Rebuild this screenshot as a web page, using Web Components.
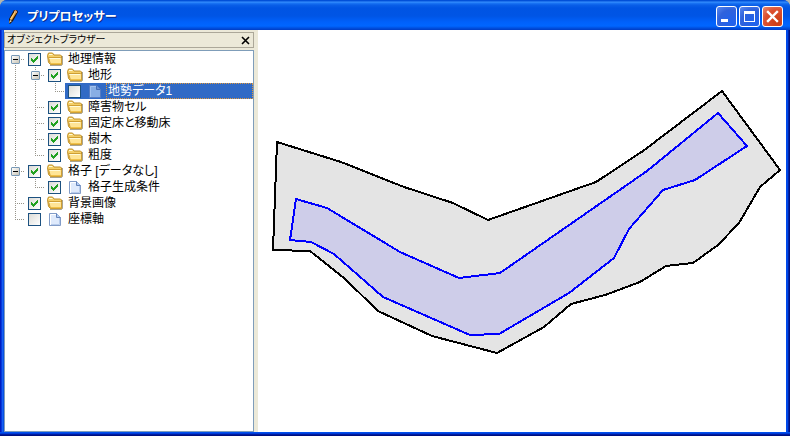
<!DOCTYPE html>
<html lang="ja">
<head>
<meta charset="utf-8">
<title>プリプロセッサー</title>
<style>
body { margin: 0; background: #b4b6ae; color: #000; font: 12px/16px "Liberation Sans", "Noto Sans CJK JP", sans-serif; font-feature-settings: "palt"; }
</style>
</head>
<body>
<app-window caption="プリプロセッサー">
  <dock-panel slot="side" caption="オブジェクトブラウザー">
    <tree-item label="地理情報" icon="folder" checked open first>
      <tree-item label="地形" icon="folder" checked open>
        <tree-item label="地勢データ1" icon="page" selected last></tree-item>
      </tree-item>
      <tree-item label="障害物セル" icon="folder" checked></tree-item>
      <tree-item label="固定床と移動床" icon="folder" checked></tree-item>
      <tree-item label="樹木" icon="folder" checked></tree-item>
      <tree-item label="粗度" icon="folder" checked last></tree-item>
    </tree-item>
    <tree-item label="格子 [データなし]" icon="folder" checked open>
      <tree-item label="格子生成条件" icon="page" checked last></tree-item>
    </tree-item>
    <tree-item label="背景画像" icon="folder" checked></tree-item>
    <tree-item label="座標軸" icon="page" last></tree-item>
  </dock-panel>
  <map-view></map-view>
</app-window>

<script>
class AppWindow extends HTMLElement {
  connectedCallback() {
    const root = this.attachShadow({ mode: 'open' });
    root.innerHTML = `
<style>
:host { display: flex; flex-direction: column; min-height: 100vh; box-sizing: border-box; border-radius: 7px 7px 0 0; overflow: hidden; background: #0046e0; }
header { display: flex; align-items: center; height: 30px; padding: 3px 7px 0 5px; box-sizing: border-box;
  background: linear-gradient(#0250d8 0 1px, #3a92ff 2px, #1c77f5 3px, #0a5fe8 5px, #0054e3 8px, #0055e5 16px, #0061fb 22px, #0066ff 26px, #0050e0 28px, #003cc4 30px); }
.logo { width: 16px; height: 16px; }
h1 { flex: 1; margin: 0 0 0 6px; color: #fff; font-size: 12px; line-height: 16px; font-weight: 700; text-shadow: 1px 1px 0 #0b2a8c; }
.controls { display: flex; gap: 2px; }
button { display: block; width: 21px; height: 21px; padding: 0; border: 1px solid #fff; border-radius: 3px; background: radial-gradient(circle at 75% 80%, #1f62ee, #2f62dc 60%, #5c8af0 100%); }
button.close { background: radial-gradient(circle at 75% 80%, #cc3c12, #dc5030 60%, #ea8a70 100%); }
button svg { display: block; width: 19px; height: 19px; }
main { flex: 1; display: flex; padding: 0 4px 4px;
  background: linear-gradient(to right, #001ec0 0 1px, #0838dc 1px 2px, #1660f0 2px 3px, #0a50e4 3px 4px, transparent 4px calc(100% - 4px), #0048e8 calc(100% - 4px) calc(100% - 2px), #0024a8 calc(100% - 2px) calc(100% - 1px), #001080 calc(100% - 1px)) no-repeat 0 0 / 100% calc(100% - 4px),
  linear-gradient(#0050ee 0 1px, #003cd8 1px 2px, #001ca0 2px 3px, #001080 3px) no-repeat 0 100% / 100% 4px; }
.client { flex: 1; display: flex; min-width: 0; background: #ece9d8; }
::slotted(map-view) { flex: 1; min-width: 0; }
</style>
<header>
  <svg class="logo" viewBox="0 0 16 16" aria-hidden="true">
    <path d="M4 14L4 10L9 1L12 1L13 3L8 12L5 15Z" fill="#2b1608"/>
    <path d="M5 10L10 2L12 3L7 11Z" fill="#e09a38"/><path d="M5 10L10 2L11 2L6 11Z" fill="#ffd684"/>
    <path d="M5 11L7 12L4 14Z" fill="#eee2c0"/><path d="M10 1L12 2L12 4L9 3Z" fill="#d9a078"/>
  </svg>
  <h1></h1>
  <div class="controls">
    <button aria-label="最小化"><svg viewBox="0 0 19 19"><path d="M4 12h7v3H4z" fill="#fff"/></svg></button>
    <button aria-label="最大化"><svg viewBox="0 0 19 19"><path d="M4 4h11v11H4zM5 7v7h9V7z" fill="#fff" fill-rule="evenodd"/></svg></button>
    <button class="close" aria-label="閉じる"><svg viewBox="0 0 19 19"><path d="M5 5l9 9M14 5l-9 9" stroke="#fff" stroke-width="2.4" stroke-linecap="square"/></svg></button>
  </div>
</header>
<main><div class="client"><slot name="side"></slot><slot></slot></div></main>`;
    root.querySelector('h1').textContent = this.getAttribute('caption');
  }
}

class DockPanel extends HTMLElement {
  connectedCallback() {
    const root = this.attachShadow({ mode: 'open' });
    root.innerHTML = `
<style>
:host { display: flex; flex-direction: column; gap: 2px; flex: 0 0 250px; margin-right: 4px; padding-top: 2px; box-sizing: border-box; }
header { display: flex; align-items: center; height: 16px; box-sizing: border-box; border: 1px solid #aca899; padding: 0 3px 0 2px; }
h2 { flex: 1; margin: 0; font-size: 10px; line-height: 14px; font-weight: 400; }
button { width: 9px; height: 9px; padding: 0; border: 0; background: none; }
button svg { display: block; }
.tree { flex: 1; border: 1px solid #7f9db9; background: #fff; }
</style>
<header><h2></h2><button aria-label="パネルを閉じる"><svg width="9" height="9" viewBox="0 0 9 9"><path d="M1 1l7 7M8 1L1 8" stroke="#000" stroke-width="1.6"/></svg></button></header>
<div class="tree" role="tree"><slot></slot></div>`;
    root.querySelector('h2').textContent = this.getAttribute('caption');
  }
}

const ICONS = {
  folder: `<path d="M3 14.500h11.500l1-1V5" fill="none" stroke="#706848" opacity=".6"/>
    <path d="M.5 4.500l1-2.500h4l1.500 2h6.500l1 1v8.500h-11l-2-2z" fill="#f5d068" stroke="#c0902a"/>
    <path d="M3.500 13.500L1.500 6.500h12l1 1v6z" fill="#ffe596" stroke="#cf9f34"/>
    <path d="M2.500 7.500h10.500M2 3.500h3.500" stroke="#fffbd8"/><path d="M4 12.500h10" stroke="#f0c24a"/>`,
  page: `<path d="M2.500 2.500h7l4 4v8h-11z" fill="#dfeafc" stroke="#829cc8"/>
    <path d="M3.500 14V3.500H9" fill="none" stroke="#fff"/><path d="M9.500 2.500v4h4" fill="#b4cdf4" stroke="#6484ba"/>
    <path d="M4 13.500h8.500V7" fill="none" stroke="#b8ccec"/>`,
  pageSelected: `<path d="M2.500 2.500h7l4 4v8h-11z" fill="#88aee4" stroke="#547bc2"/>
    <path d="M3.500 14V3.500H9" fill="none" stroke="#a3c3ef"/><path d="M9.500 2.500v4h4" fill="#6890d4" stroke="#456eb8"/>`
};

class TreeItem extends HTMLElement {
  connectedCallback() {
    const root = this.attachShadow({ mode: 'open' });
    const selected = this.hasAttribute('selected');
    root.innerHTML = `
<style>
:host { display: grid; grid-template-columns: 20px 1fr; --dots: repeating-linear-gradient(#97948a 0 1px, transparent 1px 2px); }
.rail { display: flex; align-items: center; justify-content: center; height: 16px;
  background: var(--dots) no-repeat 10px 0 / 1px 100%, repeating-linear-gradient(to right, #97948a 0 1px, transparent 1px 2px) no-repeat 10px 8px / 10px 1px; }
:host([last]) .rail { background-size: 1px 8px, 10px 1px; }
:host([first]) .rail { background-position: 10px 8px, 10px 8px; }
.stem { background: var(--dots) no-repeat 10px 0 / 1px 100%; }
:host([last]) .stem { background: none; }
.rail button { width: 9px; height: 9px; padding: 0; margin: 1px 0 0 1px; box-sizing: border-box; border: 1px solid #7898b5; border-radius: 1px;
  background: linear-gradient(#000, #000) no-repeat center / 5px 1px, linear-gradient(135deg, #fff, #c8c3b4); }
.row { display: flex; align-items: center; height: 16px; padding-left: 3px; }
input { appearance: none; flex: none; box-sizing: border-box; width: 13px; height: 13px; margin: 1px 6px 0 0; border: 1px solid #1c5180; background: linear-gradient(135deg, #dcdcd7, #fff); }
input:checked { background: url("data:image/svg+xml,%3Csvg xmlns='http://www.w3.org/2000/svg' viewBox='0 0 11 11' shape-rendering='crispEdges'%3E%3Cpath d='M2 4h1v1h1v1h1v-1h1v-1h1v-1h1v-1h1v3h-1v1h-1v1h-1v1h-1v1h-1v-1h-1v-1h-1z' fill='%2321a121'/%3E%3C/svg%3E") no-repeat center / 11px 11px, linear-gradient(135deg, #dcdcd7, #fff); }
.icon { flex: none; width: 16px; height: 16px; }
label { line-height: 14px; padding: 0 2px; margin-left: 3px; border: 1px solid transparent; border-width: 1px 0; white-space: nowrap; }
:host([selected]) .row { background: #316ac5; }
:host([selected]) label { flex: 1; color: #fff; border: 1px dotted #e0983a; padding: 0 1px; }
</style>
<div class="rail">${this.hasAttribute('open') ? '<button aria-label="折りたたむ" aria-expanded="true"></button>' : ''}</div>
<div class="row" role="treeitem">
  <input type="checkbox" id="box"${this.hasAttribute('checked') ? ' checked' : ''}>
  <svg class="icon" viewBox="0 0 16 16" aria-hidden="true">${ICONS[selected ? 'pageSelected' : this.getAttribute('icon')]}</svg>
  <label for="box"></label>
</div>
<div class="stem"></div>
<div role="group"><slot></slot></div>`;
    root.querySelector('label').textContent = this.getAttribute('label');
  }
}

class MapView extends HTMLElement {
  connectedCallback() {
    this.attachShadow({ mode: 'open' }).innerHTML = `
<style>
:host { display: flex; background: #fff; }
svg { display: block; width: 100%; height: auto; align-self: flex-start; }
polygon { stroke-width: 2; shape-rendering: crispEdges; }
.terrain { fill: #e4e4e4; stroke: #000; }
.channel { fill: #cecde9; stroke: #00f; }
</style>
<svg viewBox="258 30 528 402" role="img" aria-label="地勢データ">
  <polygon class="terrain" points="277,142 341,162 404,187 453,203 488,220 596,182 643,151 722,91 780,170 760,187 739,223 718,245 693,263 666,266 640,282 605,295 571,304 544,327 497,353 432,336 378,311 344,278 310,251 273,250"/>
  <polygon class="channel" points="296,199 327,208 400,252 459,278 500,273 647,171 718,113 747,146 695,180 663,190 629,229 614,258 569,293 499,334 470,335 383,297 334,254 311,242 290,240"/>
</svg>`;
  }
}

customElements.define('app-window', AppWindow);
customElements.define('dock-panel', DockPanel);
customElements.define('tree-item', TreeItem);
customElements.define('map-view', MapView);
</script>
</body>
</html>
